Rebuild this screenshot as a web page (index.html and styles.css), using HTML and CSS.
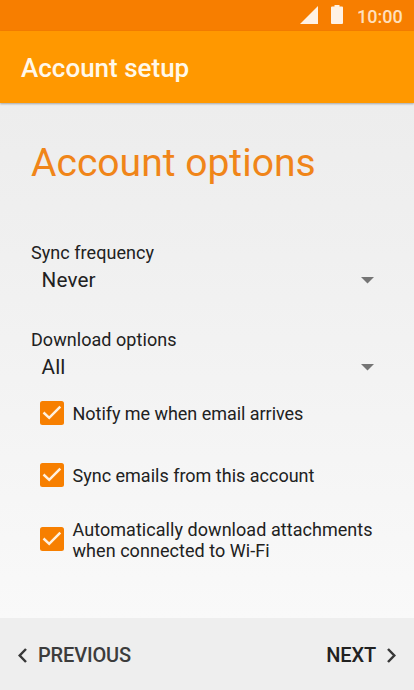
FILE: index.html
```html
<!DOCTYPE html>
<html lang="en">
<head>
<meta charset="utf-8">
<title>Account setup</title>
<link rel="stylesheet" href="styles.css">
</head>
<body>
<div class="screen">
  <div class="status-bar">
    <svg class="signal" width="18" height="18" viewBox="0 0 18 18"><path d="M18 0V18H0Z"/></svg>
    <svg class="battery" width="12" height="19" viewBox="0 0 12 19"><path d="M3.5 0H8.5V1.5H11Q12 1.5 12 2.5V18Q12 19 11 19H1Q0 19 0 18V2.5Q0 1.5 1 1.5H3.5Z"/></svg>
    <span class="clock">10:00</span>
  </div>
  <header class="toolbar"><span class="toolbar-title">Account setup</span></header>
  <main class="content">
    <h1 class="heading">Account options</h1>
    <section class="field">
      <div class="label">Sync frequency</div>
      <div class="spinner"><span>Never</span><svg class="arrow" width="13" height="7" viewBox="0 0 13 7"><path d="M0 0H13L6.5 6.5Z"/></svg></div>
    </section>
    <section class="field">
      <div class="label">Download options</div>
      <div class="spinner"><span>All</span><svg class="arrow" width="13" height="7" viewBox="0 0 13 7"><path d="M0 0H13L6.5 6.5Z"/></svg></div>
    </section>
    <div class="options">
      <div class="option">
        <svg class="check" width="24" height="24" viewBox="0 0 24 24"><rect width="24" height="24" rx="2.5"/><path d="M3.5 11.5L9.2 16.8L20.3 5.7"/></svg>
        <span class="option-text notify">Notify me when email arrives</span>
      </div>
      <div class="option">
        <svg class="check" width="24" height="24" viewBox="0 0 24 24"><rect width="24" height="24" rx="2.5"/><path d="M3.5 11.5L9.2 16.8L20.3 5.7"/></svg>
        <span class="option-text">Sync emails from this account</span>
      </div>
      <div class="option option-tall">
        <svg class="check" width="24" height="24" viewBox="0 0 24 24"><rect width="24" height="24" rx="2.5"/><path d="M3.5 11.5L9.2 16.8L20.3 5.7"/></svg>
        <span class="option-text automatic">Automatically download attachments<br>when connected to Wi-Fi</span>
      </div>
    </div>
  </main>
  <footer class="footer">
    <div class="nav previous"><svg class="chevron" width="9" height="15" viewBox="0 0 9 15"><path d="M8 1L1.7 7.5L8 14"/></svg><span>PREVIOUS</span></div>
    <div class="nav next"><span>NEXT</span><svg class="chevron" width="9" height="15" viewBox="0 0 9 15"><path d="M1 1L7.3 7.5L1 14"/></svg></div>
  </footer>
</div>
</body>
</html>
```
FILE: styles.css
```css
* { box-sizing: border-box; }
body { margin: 0; font-family: Roboto, "Liberation Sans", sans-serif; color: #212121; }
svg { display: block; flex: none; }
.screen { width: 414px; height: 690px; display: flex; flex-direction: column; overflow: hidden; background: #f0f0f0; white-space: nowrap; }
.status-bar { height: 31px; flex: none; display: flex; justify-content: flex-end; background: #f77e00; padding: 5px 11px 0 0; }
.status-bar svg { fill: #fff2e4; }
.signal { margin: 1px 13px 0 0; }
.battery { margin-right: 14px; }
.clock { width: 46px; font-size: 18px; font-weight: 500; line-height: 23px; color: #ffe0bd; }
.toolbar { height: 72px; flex: none; display: flex; align-items: center; padding: 2px 21px 0; background: #ff9800; box-shadow: 0 1px 2px rgba(0,0,0,.3); position: relative; }
.toolbar-title { font-size: 26px; font-weight: 500; line-height: 32px; color: #fff8ea; }
.content { flex: 1; padding: 33px 31px 0; background: linear-gradient(#ededed, #f0f0f0 30%, #f9f9f9); }
.heading { margin: 0 0 52px; font-size: 39.05px; font-weight: 400; line-height: 54px; color: #f08519; }
.field { height: 87px; }
.label { font-size: 18px; letter-spacing: .05px; line-height: 22px; }
.spinner { display: flex; align-items: center; justify-content: space-between; height: 32px; padding: 0 9px 0 10.5px; font-size: 20.7px; letter-spacing: .15px; }
.arrow { fill: #757575; }
.options { display: flex; flex-direction: column; padding-left: 9px; margin-top: -34px; }
.option { display: flex; align-items: center; gap: 8.5px; height: 62px; }
.option-tall { height: 66px; }
.option-text { font-size: 18px; line-height: 21px; }
.notify { letter-spacing: -.04px; }
.automatic { letter-spacing: .05px; padding-top: 1px; }
.check rect { fill: #f77f00; }
.check path { fill: none; stroke: #fff1df; stroke-width: 2.5; }
.footer { height: 72px; flex: none; display: flex; align-items: center; justify-content: space-between; padding: 2px 18px 0 18px; background: #eee; font-size: 20px; font-weight: 500; letter-spacing: -.15px; }
.nav { display: flex; align-items: center; gap: 11px; }
.previous { color: #3c3c3c; }
.chevron { fill: none; stroke: #383838; stroke-width: 2.5; }
```
